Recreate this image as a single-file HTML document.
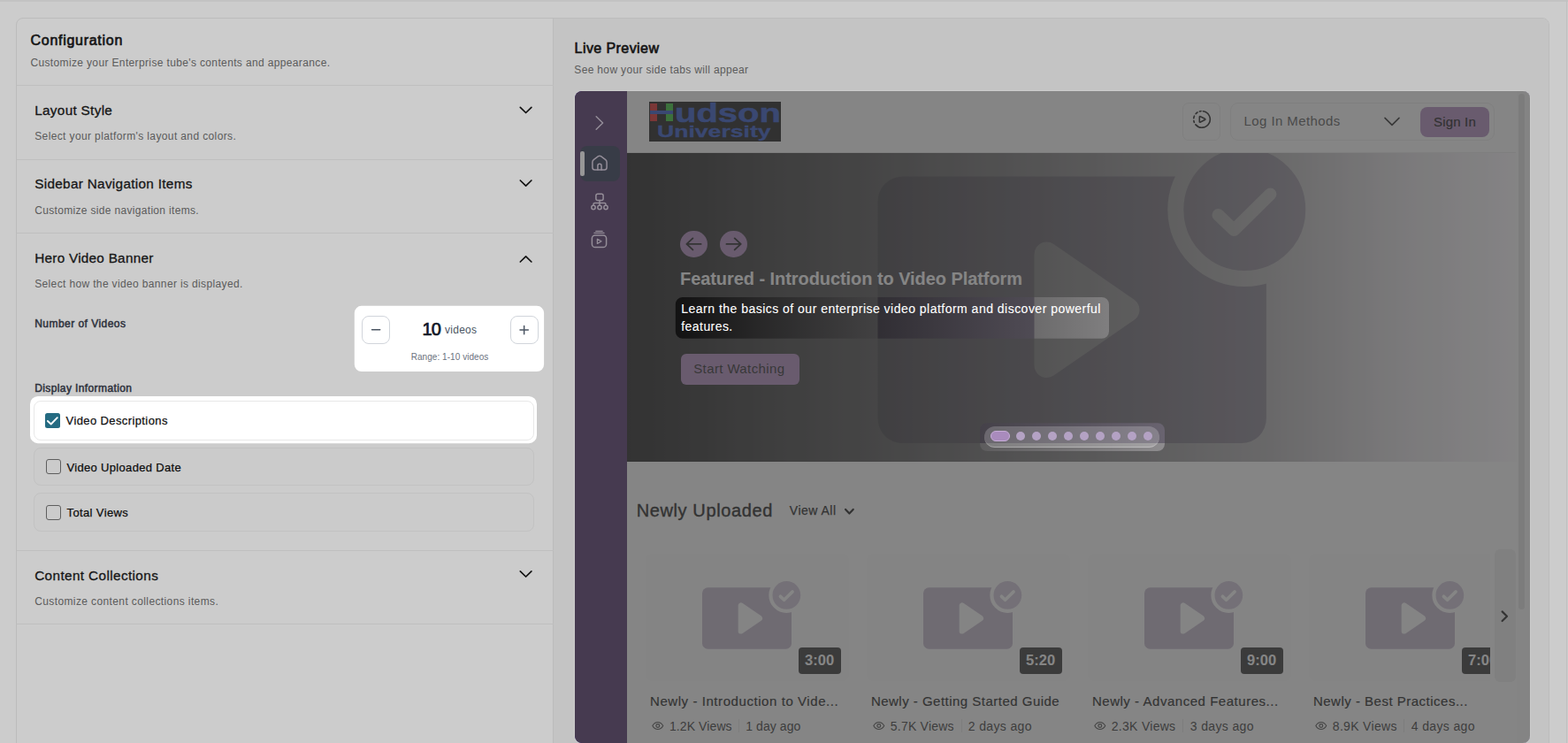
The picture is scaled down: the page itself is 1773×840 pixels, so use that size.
<!DOCTYPE html>
<html lang="en">
<head>
<meta charset="utf-8">
<title>Enterprise Tube Configuration</title>
<style>
*{box-sizing:border-box;margin:0;padding:0}
html,body{width:1773px;height:840px;overflow:hidden;background:#fff}
body{font-family:"Liberation Sans",Arial,sans-serif;color:#171717}
#page{position:relative;width:1773px;height:840px;overflow:hidden;background:#fff}
.a{position:absolute}
.t{position:absolute;white-space:nowrap;display:block}
svg{position:absolute;overflow:visible}
.line{position:absolute;left:18.5px;width:607px;height:1px;background:#efefef}
.row{position:absolute;left:38.3px;width:566.2px;border:1px solid #f3f3f3;border-radius:8px}
.cb{position:absolute;width:17px;height:17px;border:1.2px solid #767676;border-radius:3px;background:transparent}
.sbtn{position:absolute;width:32px;height:32px;border:1px solid #d1d5db;border-radius:8px;background:#fff}
.thumb{position:absolute;top:626px;width:230px;height:144px;border-radius:8px;background:#fcfafc;overflow:hidden}
.dur{position:absolute;top:731.8px;height:30px;width:48.5px;border-radius:4px;background:#202020}
.sep{position:absolute;top:813px;width:1px;height:14.5px;background:#e6e6e6}
</style>
</head>
<body>
<div id="page">
<div class="a" style="left:0;top:0;width:1773px;height:1.5px;background:#f4f4f4"></div>
<div class="a" style="left:1770.5px;top:0;width:1px;height:840px;background:#f0f0f0"></div>
<div class="a" style="left:18px;top:20px;width:1734px;height:900px;border:1px solid #ebebeb;border-radius:8px;background:#fff;overflow:hidden"><div class="a" style="left:606px;top:0;width:1127px;height:900px;background:#f5f5f5;border-left:1px solid #ececec"></div></div>
<section id="configuration" aria-label="Configuration">
<span class="t" id="cfg" style="left:34.60px;top:34px;font-size:16px;line-height:24px;font-weight:400;color:#1a1a1a;letter-spacing:0.710px;-webkit-text-stroke:0.65px #1a1a1a;">Configuration</span>
<span class="t" id="cfgs" style="left:34.40px;top:62px;font-size:12px;line-height:18px;font-weight:400;color:#737373;letter-spacing:0.360px;">Customize your Enterprise tube&#x27;s contents and appearance.</span>
<div class="line" style="top:96.2px"></div>
<span class="t" id="ls" style="left:39.20px;top:113px;font-size:15.3px;line-height:23px;font-weight:400;color:#1c1c1c;letter-spacing:0.318px;-webkit-text-stroke:0.3px #1c1c1c;">Layout Style</span>
<span class="t" id="lss" style="left:39.20px;top:145px;font-size:12px;line-height:18px;font-weight:400;color:#737373;letter-spacing:0.381px;">Select your platform&#x27;s layout and colors.</span>
<svg class="a" style="left:0;top:0" width="1" height="1"><path d="M588.30 121.30 L594.60 127.50 L600.90 121.30" fill="none" stroke="#171717" stroke-width="1.7" stroke-linecap="round" stroke-linejoin="round"/></svg>
<div class="line" style="top:179.5px"></div>
<span class="t" id="sn" style="left:39.20px;top:196px;font-size:15.3px;line-height:23px;font-weight:400;color:#1c1c1c;letter-spacing:0.316px;-webkit-text-stroke:0.3px #1c1c1c;">Sidebar Navigation Items</span>
<span class="t" id="sns" style="left:39.20px;top:229px;font-size:12px;line-height:18px;font-weight:400;color:#737373;letter-spacing:0.324px;">Customize side navigation items.</span>
<svg class="a" style="left:0;top:0" width="1" height="1"><path d="M588.30 204.00 L594.60 210.20 L600.90 204.00" fill="none" stroke="#171717" stroke-width="1.7" stroke-linecap="round" stroke-linejoin="round"/></svg>
<div class="line" style="top:263px"></div>
<span class="t" id="hv" style="left:39.20px;top:280px;font-size:15.3px;line-height:23px;font-weight:400;color:#1c1c1c;letter-spacing:0.268px;-webkit-text-stroke:0.3px #1c1c1c;">Hero Video Banner</span>
<span class="t" id="hvs" style="left:39.20px;top:312px;font-size:12px;line-height:18px;font-weight:400;color:#737373;letter-spacing:0.358px;">Select how the video banner is displayed.</span>
<svg class="a" style="left:0;top:0" width="1" height="1"><path d="M588.30 296.00 L594.60 289.80 L600.90 296.00" fill="none" stroke="#171717" stroke-width="1.7" stroke-linecap="round" stroke-linejoin="round"/></svg>
<span class="t" id="nov" style="left:39.20px;top:357px;font-size:12px;line-height:18px;font-weight:400;color:#3a404d;letter-spacing:0.460px;-webkit-text-stroke:0.5px #3a404d;">Number of Videos</span>
<div class="sbtn" style="left:409px;top:357px"></div>
<div class="sbtn" style="left:577px;top:357px"></div>
<svg class="a" style="left:0;top:0" width="1" height="1"><path d="M420.5 372.8H429.7 M588 373H597.3 M592.65 368.4V377.7" fill="none" stroke="#4b5563" stroke-width="1.5" stroke-linecap="round"/></svg>
<span class="t" id="n10" style="left:477.60px;top:357px;font-size:20px;line-height:30px;font-weight:400;color:#111827;letter-spacing:-1.025px;-webkit-text-stroke:0.7px #111827;">10</span>
<span class="t" id="nvid" style="left:502.90px;top:364px;font-size:12px;line-height:18px;font-weight:400;color:#4b5563;letter-spacing:0.302px;">videos</span>
<span class="t" id="rng" style="left:464.70px;top:396px;font-size:10px;line-height:15px;font-weight:400;color:#6b7280;letter-spacing:0.054px;">Range: 1-10 videos</span>
<span class="t" id="di" style="left:39.20px;top:430px;font-size:12px;line-height:18px;font-weight:400;color:#3a404d;letter-spacing:0.394px;-webkit-text-stroke:0.5px #3a404d;">Display Information</span>
<div class="row" style="top:453.1px;height:44.6px;background:#fff;border-color:#e8e8e8"></div>
<div class="row" style="top:505.6px;height:43.6px;background:#fefefe"></div>
<div class="row" style="top:557.1px;height:44.3px;background:#fefefe"></div>
<div class="cb" style="left:50.9px;top:466.8px;width:17.3px;height:17.2px;border:none;background:#256b82;border-radius:2.5px"></div>
<svg class="a" style="left:0;top:0" width="1" height="1"><path d="M53.9 476.0 L57.7 479.5 L64.8 472.2" fill="none" stroke="#fff" stroke-width="1.9" stroke-linecap="round" stroke-linejoin="round"/></svg>
<div class="cb" style="left:51.6px;top:519px"></div>
<div class="cb" style="left:51.6px;top:570.8px"></div>
<span class="t" id="c1" style="left:74.60px;top:466px;font-size:13px;line-height:20px;font-weight:400;color:#111111;letter-spacing:0.391px;-webkit-text-stroke:0.25px #111111;">Video Descriptions</span>
<span class="t" id="c2" style="left:75.50px;top:519px;font-size:13px;line-height:20px;font-weight:400;color:#111111;letter-spacing:0.323px;-webkit-text-stroke:0.25px #111111;">Video Uploaded Date</span>
<span class="t" id="c3" style="left:75.50px;top:570px;font-size:13px;line-height:20px;font-weight:400;color:#111111;letter-spacing:0.380px;-webkit-text-stroke:0.25px #111111;">Total Views</span>
<div class="line" style="top:622px"></div>
<span class="t" id="cc" style="left:39.20px;top:639px;font-size:15.3px;line-height:23px;font-weight:400;color:#1c1c1c;letter-spacing:0.387px;-webkit-text-stroke:0.3px #1c1c1c;">Content Collections</span>
<span class="t" id="ccs" style="left:39.20px;top:671px;font-size:12px;line-height:18px;font-weight:400;color:#737373;letter-spacing:0.386px;">Customize content collections items.</span>
<svg class="a" style="left:0;top:0" width="1" height="1"><path d="M588.30 645.80 L594.60 652.00 L600.90 645.80" fill="none" stroke="#171717" stroke-width="1.7" stroke-linecap="round" stroke-linejoin="round"/></svg>
<div class="line" style="top:705px"></div>
</section>
<section id="live-preview" aria-label="Live Preview">
<span class="t" id="lp" style="left:649.60px;top:43px;font-size:16px;line-height:24px;font-weight:400;color:#1a1a1a;letter-spacing:0.425px;-webkit-text-stroke:0.65px #1a1a1a;">Live Preview</span>
<span class="t" id="lps" style="left:649.30px;top:70px;font-size:12px;line-height:18px;font-weight:400;color:#737373;letter-spacing:0.343px;">See how your side tabs will appear</span>
<div class="a" id="frame" style="left:649.5px;top:102.5px;width:1080.5px;height:737.5px;border-radius:8px;overflow:hidden;background:#3b2274;box-shadow:0 0 0 1px rgba(255,255,255,.85)">
<div class="a" style="left:-649.5px;top:-102.5px;width:1773px;height:840px">
<svg class="a" style="left:0;top:0" width="0" height="0"><defs><g id="ph"><rect x="0" y="0" width="439.4" height="301.5" rx="28" fill="#bab0c6"/><path d="M191 87.9 V213.4 L282 150.65 Z" fill="#fcfafc" stroke="#fcfafc" stroke-width="28" stroke-linejoin="round"/><circle cx="414.8" cy="37.4" r="78" fill="#c2b9cd" stroke="#fcfafc" stroke-width="18"/><path d="M385 43.4 L402.8 60.4 L443.9 20" fill="none" stroke="#fcfafc" stroke-width="14" stroke-linecap="round" stroke-linejoin="round"/></g><g id="phs"><rect x="0" y="0" width="439.4" height="301.5" rx="28" fill="#bcb0c5"/><path d="M191 87.9 V213.4 L282 150.65 Z" fill="#fcfafc" stroke="#fcfafc" stroke-width="28" stroke-linejoin="round"/><circle cx="414.8" cy="37.4" r="78" fill="#cbc1d4" stroke="#fcfafc" stroke-width="18"/><path d="M385 43.4 L402.8 60.4 L443.9 20" fill="none" stroke="#ffffff" stroke-width="16" stroke-linecap="round" stroke-linejoin="round"/></g><linearGradient id="bg" x1="0" x2="1" y1="0" y2="0">
<stop offset="0" stop-color="#000" stop-opacity=".965"/>
<stop offset=".07" stop-color="#000" stop-opacity=".915"/>
<stop offset=".15" stop-color="#000" stop-opacity=".84"/>
<stop offset=".28" stop-color="#000" stop-opacity=".74"/>
<stop offset=".72" stop-color="#000" stop-opacity=".328"/>
<stop offset=".866" stop-color="#000" stop-opacity=".126"/>
<stop offset="1" stop-color="#000" stop-opacity="0"/>
</linearGradient>
</defs></svg>
<div class="a" style="left:708.5px;top:102.5px;width:1022px;height:738px;background:#fff"></div>
<div class="a" style="left:708.5px;top:172.2px;width:1005.5px;height:1px;background:#e9e9e9"></div>
<div class="a" style="left:733.8px;top:115.2px;width:149.6px;height:44.6px;background:#030303;overflow:hidden"><div class="a" style="left:1.3px;top:2.3px;width:7.5px;height:19.6px;background:#dd1414"></div><div class="a" style="left:19.3px;top:2.3px;width:7.6px;height:19.6px;background:#22c422"></div><div class="a" style="left:1.3px;top:10.2px;width:25.6px;height:4px;background:#1f48c5"></div><span class="t" style="left:29.6px;top:-7.6px;font-size:29px;line-height:40px;font-weight:700;color:#1f48c5;-webkit-text-stroke:0.5px #1f48c5;transform-origin:0 0;transform:scaleX(1.378)">udson</span><span class="t" style="left:9.6px;top:19.9px;font-size:18.6px;line-height:28px;font-weight:700;color:#1f48c5;-webkit-text-stroke:0.3px #1f48c5;transform-origin:0 0;transform:scaleX(1.43)">University</span></div>
<div class="a" style="left:1337.3px;top:116px;width:42.6px;height:43px;border:1px solid #ebebeb;border-radius:7px"></div>
<svg class="a" style="left:0;top:0" width="1" height="1" fill="none" stroke="#0c0c0c" stroke-width="1.6" stroke-linecap="round" stroke-linejoin="round"><path d="M1360.29 125.69A9.3 9.3 0 1 1 1351.88 140.88 M1350.38 138.38A9.3 9.3 0 0 1 1349.84 136.51 M1349.79 133.61A9.3 9.3 0 0 1 1350.50 131.12 M1352.09 128.68A9.3 9.3 0 0 1 1354.07 127.01 M1356.44 125.96A9.3 9.3 0 0 1 1358.03 125.65"/><path d="M1356.3 132.4 Q1356.3 131.2 1357.4 131.8 L1362.3 134.3 Q1363.4 134.9 1362.3 135.5 L1357.4 138 Q1356.3 138.6 1356.3 137.4 Z"/></svg>
<div class="a" style="left:1390.6px;top:116px;width:299.6px;height:43px;border:1px solid #ebebeb;border-radius:9px"></div>
<span class="t" id="lim" style="left:1406.60px;top:126px;font-size:15px;line-height:22px;font-weight:400;color:#4c4c4c;letter-spacing:0.400px;">Log In Methods</span>
<svg class="a" style="left:0;top:0" width="1" height="1"><path d="M1566.00 133.40 L1574.00 141.40 L1582.00 133.40" fill="none" stroke="#1a1a1a" stroke-width="1.6" stroke-linecap="round" stroke-linejoin="round"/></svg>
<div class="a" style="left:1606.2px;top:120.6px;width:78px;height:34.4px;border-radius:8px;background:#aa80ba"></div>
<span class="t" id="si" style="left:1621.00px;top:127px;font-size:15px;line-height:22px;font-weight:400;color:#000;letter-spacing:0.185px;-webkit-text-stroke:0.18px #000;">Sign In</span>
<div class="a" style="left:708.5px;top:173px;width:1006.5px;height:349px;background:#fcf9fd;overflow:hidden"><svg class="a" style="left:0;top:0" width="1006.5" height="349" viewBox="708.5 173 1006.5 349"><use href="#ph" x="992" y="199.6"/><rect x="708.5" y="173" width="1006.5" height="349" fill="url(#bg)"/></svg></div>
<div class="a" style="left:769.4px;top:260.7px;width:30.4px;height:30.4px;border-radius:50%;background:#aa80ba"></div>
<svg class="a" style="left:0;top:0" width="1" height="1"><path d="M792.6 275.9H776.6 M783.4 269.4L776.4 275.9L783.4 282.4" fill="none" stroke="#0a0a0a" stroke-width="1.9" stroke-linecap="round" stroke-linejoin="round"/></svg>
<div class="a" style="left:814.3px;top:260.7px;width:30.4px;height:30.4px;border-radius:50%;background:#aa80ba"></div>
<svg class="a" style="left:0;top:0" width="1" height="1"><path d="M821.5 275.9H837.5 M830.7 269.4L837.7 275.9L830.7 282.4" fill="none" stroke="#0a0a0a" stroke-width="1.9" stroke-linecap="round" stroke-linejoin="round"/></svg>
<span class="t" id="ft" style="left:769.00px;top:300px;font-size:20px;line-height:30px;font-weight:700;color:#ffffff;letter-spacing:-0.064px;">Featured - Introduction to Video Platform</span>
<span class="t" id="d1" style="left:770.30px;top:339px;font-size:14px;line-height:21px;font-weight:400;color:#ffffff;letter-spacing:0.481px;-webkit-text-stroke:0.1px #ffffff;">Learn the basics of our enterprise video platform and discover powerful</span>
<span class="t" id="d2" style="left:770.30px;top:359px;font-size:14px;line-height:21px;font-weight:400;color:#ffffff;letter-spacing:0.435px;-webkit-text-stroke:0.1px #ffffff;">features.</span>
<div class="a" style="left:769.6px;top:400px;width:134.2px;height:34.8px;border-radius:6px;background:#aa80ba"></div>
<span class="t" id="sw" style="left:784.20px;top:406px;font-size:15px;line-height:22px;font-weight:400;color:#141414;letter-spacing:0.391px;">Start Watching</span>
<div class="a" style="left:1112.6px;top:482px;width:198.3px;height:24.2px;border-radius:12.1px;background:rgba(255,255,255,.2);border-bottom:1px solid rgba(255,255,255,.3)"></div>
<div class="a" style="left:1120px;top:486.9px;width:22px;height:12.1px;border-radius:6.1px;background:#a98bbd;border:1px solid #c6add6"></div>
<div class="a" style="left:1148.95px;top:487.95px;width:10.1px;height:10.1px;border-radius:50%;background:#b4a2c4"></div>
<div class="a" style="left:1166.97px;top:487.95px;width:10.1px;height:10.1px;border-radius:50%;background:#b4a2c4"></div>
<div class="a" style="left:1184.99px;top:487.95px;width:10.1px;height:10.1px;border-radius:50%;background:#b4a2c4"></div>
<div class="a" style="left:1203.01px;top:487.95px;width:10.1px;height:10.1px;border-radius:50%;background:#b4a2c4"></div>
<div class="a" style="left:1221.03px;top:487.95px;width:10.1px;height:10.1px;border-radius:50%;background:#b4a2c4"></div>
<div class="a" style="left:1239.05px;top:487.95px;width:10.1px;height:10.1px;border-radius:50%;background:#b4a2c4"></div>
<div class="a" style="left:1257.07px;top:487.95px;width:10.1px;height:10.1px;border-radius:50%;background:#b4a2c4"></div>
<div class="a" style="left:1275.09px;top:487.95px;width:10.1px;height:10.1px;border-radius:50%;background:#b4a2c4"></div>
<div class="a" style="left:1293.11px;top:487.95px;width:10.1px;height:10.1px;border-radius:50%;background:#b4a2c4"></div>
<span class="t" id="nu" style="left:719.70px;top:562px;font-size:20px;line-height:30px;font-weight:400;color:#050505;letter-spacing:0.611px;-webkit-text-stroke:0.42px #050505;">Newly Uploaded</span>
<span class="t" id="va" style="left:892.80px;top:567px;font-size:14px;line-height:21px;font-weight:400;color:#050505;letter-spacing:0.502px;-webkit-text-stroke:0.25px #050505;">View All</span>
<svg class="a" style="left:0;top:0" width="1" height="1"><path d="M956.10 575.90 L960.40 580.50 L964.70 575.90" fill="none" stroke="#050505" stroke-width="2.2" stroke-linecap="round" stroke-linejoin="round"/></svg>
<div class="a" style="left:708.5px;top:600px;width:976.4px;height:240px;overflow:hidden"><div class="a" style="left:-708.5px;top:-600px;width:1773px;height:840px">
<div class="thumb" style="left:729.7px"></div>
<svg class="a" style="left:794.1px;top:663.7px" width="101" height="70" viewBox="0 0 439.4 301.5"><use href="#phs"/></svg>
<div class="dur" style="left:902.7px"></div>
<span class="t" id="du0" style="left:910.10px;top:734px;font-size:16.5px;line-height:25px;font-weight:700;color:#ffffff;letter-spacing:0.042px;">3:00</span>
<span class="t" id="ct0" style="left:735.00px;top:782px;font-size:15px;line-height:22px;font-weight:400;color:#050505;letter-spacing:0.569px;-webkit-text-stroke:0.18px #050505;">Newly - Introduction to Vide...</span>
<svg class="a" style="left:736.7px;top:814.3px" width="13.6" height="13" viewBox="0 0 24 24" fill="none" stroke="#3a3a3a" stroke-width="2" stroke-linecap="round" stroke-linejoin="round" preserveAspectRatio="none"><path d="M1.5 12S5.5 4.5 12 4.5 22.500 12 22.500 12 18.500 19.500 12 19.500 1.500 12 1.500 12Z"/><circle cx="12" cy="12" r="3.4"/></svg>
<span class="t" id="cv0" style="left:756.90px;top:811px;font-size:14px;line-height:21px;font-weight:400;color:#262626;letter-spacing:0.102px;">1.2K Views</span>
<div class="sep" style="left:834.5px"></div>
<span class="t" id="ca0" style="left:843.20px;top:811px;font-size:14px;line-height:21px;font-weight:400;color:#262626;letter-spacing:0.078px;">1 day ago</span>
<div class="thumb" style="left:979.6px"></div>
<svg class="a" style="left:1044.0px;top:663.7px" width="101" height="70" viewBox="0 0 439.4 301.5"><use href="#phs"/></svg>
<div class="dur" style="left:1152.6px"></div>
<span class="t" id="du1" style="left:1160.00px;top:734px;font-size:16.5px;line-height:25px;font-weight:700;color:#ffffff;letter-spacing:0.042px;">5:20</span>
<span class="t" id="ct1" style="left:984.90px;top:782px;font-size:15px;line-height:22px;font-weight:400;color:#050505;letter-spacing:0.484px;-webkit-text-stroke:0.18px #050505;">Newly - Getting Started Guide</span>
<svg class="a" style="left:986.6px;top:814.3px" width="13.6" height="13" viewBox="0 0 24 24" fill="none" stroke="#3a3a3a" stroke-width="2" stroke-linecap="round" stroke-linejoin="round" preserveAspectRatio="none"><path d="M1.5 12S5.5 4.5 12 4.5 22.500 12 22.500 12 18.500 19.500 12 19.500 1.500 12 1.500 12Z"/><circle cx="12" cy="12" r="3.4"/></svg>
<span class="t" id="cv1" style="left:1006.80px;top:811px;font-size:14px;line-height:21px;font-weight:400;color:#262626;letter-spacing:0.222px;">5.7K Views</span>
<div class="sep" style="left:1086.6px"></div>
<span class="t" id="ca1" style="left:1094.80px;top:811px;font-size:14px;line-height:21px;font-weight:400;color:#262626;letter-spacing:0.360px;">2 days ago</span>
<div class="thumb" style="left:1229.6px"></div>
<svg class="a" style="left:1294.0px;top:663.7px" width="101" height="70" viewBox="0 0 439.4 301.5"><use href="#phs"/></svg>
<div class="dur" style="left:1402.6px"></div>
<span class="t" id="du2" style="left:1410.00px;top:734px;font-size:16.5px;line-height:25px;font-weight:700;color:#ffffff;letter-spacing:0.042px;">9:00</span>
<span class="t" id="ct2" style="left:1234.90px;top:782px;font-size:15px;line-height:22px;font-weight:400;color:#050505;letter-spacing:0.531px;-webkit-text-stroke:0.18px #050505;">Newly - Advanced Features...</span>
<svg class="a" style="left:1236.6px;top:814.3px" width="13.6" height="13" viewBox="0 0 24 24" fill="none" stroke="#3a3a3a" stroke-width="2" stroke-linecap="round" stroke-linejoin="round" preserveAspectRatio="none"><path d="M1.5 12S5.5 4.5 12 4.5 22.500 12 22.500 12 18.500 19.500 12 19.500 1.500 12 1.500 12Z"/><circle cx="12" cy="12" r="3.4"/></svg>
<span class="t" id="cv2" style="left:1256.80px;top:811px;font-size:14px;line-height:21px;font-weight:400;color:#262626;letter-spacing:0.282px;">2.3K Views</span>
<div class="sep" style="left:1337.1px"></div>
<span class="t" id="ca2" style="left:1345.80px;top:811px;font-size:14px;line-height:21px;font-weight:400;color:#262626;letter-spacing:0.360px;">3 days ago</span>
<div class="thumb" style="left:1479.6px"></div>
<svg class="a" style="left:1544.0px;top:663.7px" width="101" height="70" viewBox="0 0 439.4 301.5"><use href="#phs"/></svg>
<div class="dur" style="left:1652.6px"></div>
<span class="t" id="du3" style="left:1660.00px;top:734px;font-size:16.5px;line-height:25px;font-weight:700;color:#ffffff;letter-spacing:0.042px;">7:00</span>
<span class="t" id="ct3" style="left:1484.90px;top:782px;font-size:15px;line-height:22px;font-weight:400;color:#050505;letter-spacing:0.498px;-webkit-text-stroke:0.18px #050505;">Newly - Best Practices...</span>
<svg class="a" style="left:1486.6px;top:814.3px" width="13.6" height="13" viewBox="0 0 24 24" fill="none" stroke="#3a3a3a" stroke-width="2" stroke-linecap="round" stroke-linejoin="round" preserveAspectRatio="none"><path d="M1.5 12S5.5 4.5 12 4.5 22.500 12 22.500 12 18.500 19.500 12 19.500 1.500 12 1.500 12Z"/><circle cx="12" cy="12" r="3.4"/></svg>
<span class="t" id="cv3" style="left:1506.80px;top:811px;font-size:14px;line-height:21px;font-weight:400;color:#262626;letter-spacing:0.322px;">8.9K Views</span>
<div class="sep" style="left:1587.1px"></div>
<span class="t" id="ca3" style="left:1595.80px;top:811px;font-size:14px;line-height:21px;font-weight:400;color:#262626;letter-spacing:0.360px;">4 days ago</span>
</div></div>
<div class="a" style="left:1690px;top:620.6px;width:24.4px;height:150px;border-radius:6px;background:#efefef"></div>
<svg class="a" style="left:0;top:0" width="1" height="1"><path d="M1698.6 691.4 L1704 696.7 L1698.6 702" fill="none" stroke="#0a0a0a" stroke-width="2.2" stroke-linecap="round" stroke-linejoin="round"/></svg>
<div class="a" style="left:1715px;top:102.5px;width:15px;height:738px;background:#fbfbfb"></div>
<div class="a" style="left:1717.4px;top:105.7px;width:6.5px;height:583.3px;border-radius:3.2px;background:#e3e3e3"></div>
<svg class="a" style="left:0;top:0" width="1773" height="840"><path fill-rule="evenodd" fill="rgb(104,104,104)" fill-opacity=".585" d="M708.5 102.5H1730V840H708.5Z M771.8 336H1246A8 8 0 0 1 1254 344V374.8A8 8 0 0 1 1246 382.8H771.8A8 8 0 0 1 763.8 374.8V344A8 8 0 0 1 771.8 336Z M1116 478.2H1309A8 8 0 0 1 1317 486.2V502A8 8 0 0 1 1309 510H1116A8 8 0 0 1 1108 502V486.2A8 8 0 0 1 1116 478.2Z"/></svg>
<nav aria-label="Preview sidebar">
<div class="a" style="left:649.5px;top:102.5px;width:59px;height:737.5px;background:#584964;border-radius:8px 0 0 8px"></div>
<div class="a" style="left:656.4px;top:165px;width:44.6px;height:39.6px;border-radius:8px;background:#474b59"></div>
<div class="a" style="left:656.4px;top:171px;width:4.2px;height:28px;border-radius:2.1px;background:#bdbdbd"></div>
<svg class="a" style="left:0;top:0" width="1" height="1" fill="none" stroke="#b9b1bf" stroke-width="1.5" stroke-linecap="round" stroke-linejoin="round"><path d="M674.2 131.8 L681.6 139 L674.2 146.2"/><path d="M669.9 183.4 Q669.9 181.7 671.2 180.7 L676.5 176.7 Q678 175.6 679.5 176.7 L684.8 180.7 Q686.1 181.7 686.1 183.4 V189.3 Q686.1 192.1 683.3 192.1 H672.7 Q669.9 192.1 669.9 189.3 Z"/><path d="M675.9 192 V187.4 Q675.9 185.3 678 185.3 Q680.1 185.3 680.1 187.4 V192"/><rect x="673.9" y="219.3" width="8.2" height="7.2" rx="2"/><path d="M678 226.5 V232 M671 232 V231 Q671 229.4 672.6 229.4 H683.4 Q685 229.4 685 231 V232"/><circle cx="671" cy="234.5" r="2.2"/><circle cx="678" cy="234.5" r="2.2"/><circle cx="685" cy="234.5" r="2.2"/><rect x="669.4" y="265.9" width="16.2" height="13.6" rx="3.6"/><path d="M672 263.4 H683 M673.8 261.3 H681.2" stroke-width="1.3"/><path d="M675.4 270.2 V275.4 L680 272.8 Z" stroke-width="1.3"/></svg>
</nav>
</div></div>
</section>
<svg class="a" style="left:0;top:0" width="1773" height="840"><path fill-rule="evenodd" fill="#000" fill-opacity=".2" d="M0 0H1773V840H0Z M408.8 345.8H607.1A8 8 0 0 1 615.1 353.8V412A8 8 0 0 1 607.1 420H408.8A8 8 0 0 1 400.8 412V353.8A8 8 0 0 1 408.8 345.8Z M43 447.9H598A9 9 0 0 1 607 456.9V492.2A9 9 0 0 1 598 501.2H43A9 9 0 0 1 34 492.2V456.9A9 9 0 0 1 43 447.9Z M771.8 336H1246A8 8 0 0 1 1254 344V374.8A8 8 0 0 1 1246 382.8H771.8A8 8 0 0 1 763.8 374.8V344A8 8 0 0 1 771.8 336Z M1116 478.2H1309A8 8 0 0 1 1317 486.2V502A8 8 0 0 1 1309 510H1116A8 8 0 0 1 1108 502V486.2A8 8 0 0 1 1116 478.2Z"/></svg>
</div>
</body>
</html>
